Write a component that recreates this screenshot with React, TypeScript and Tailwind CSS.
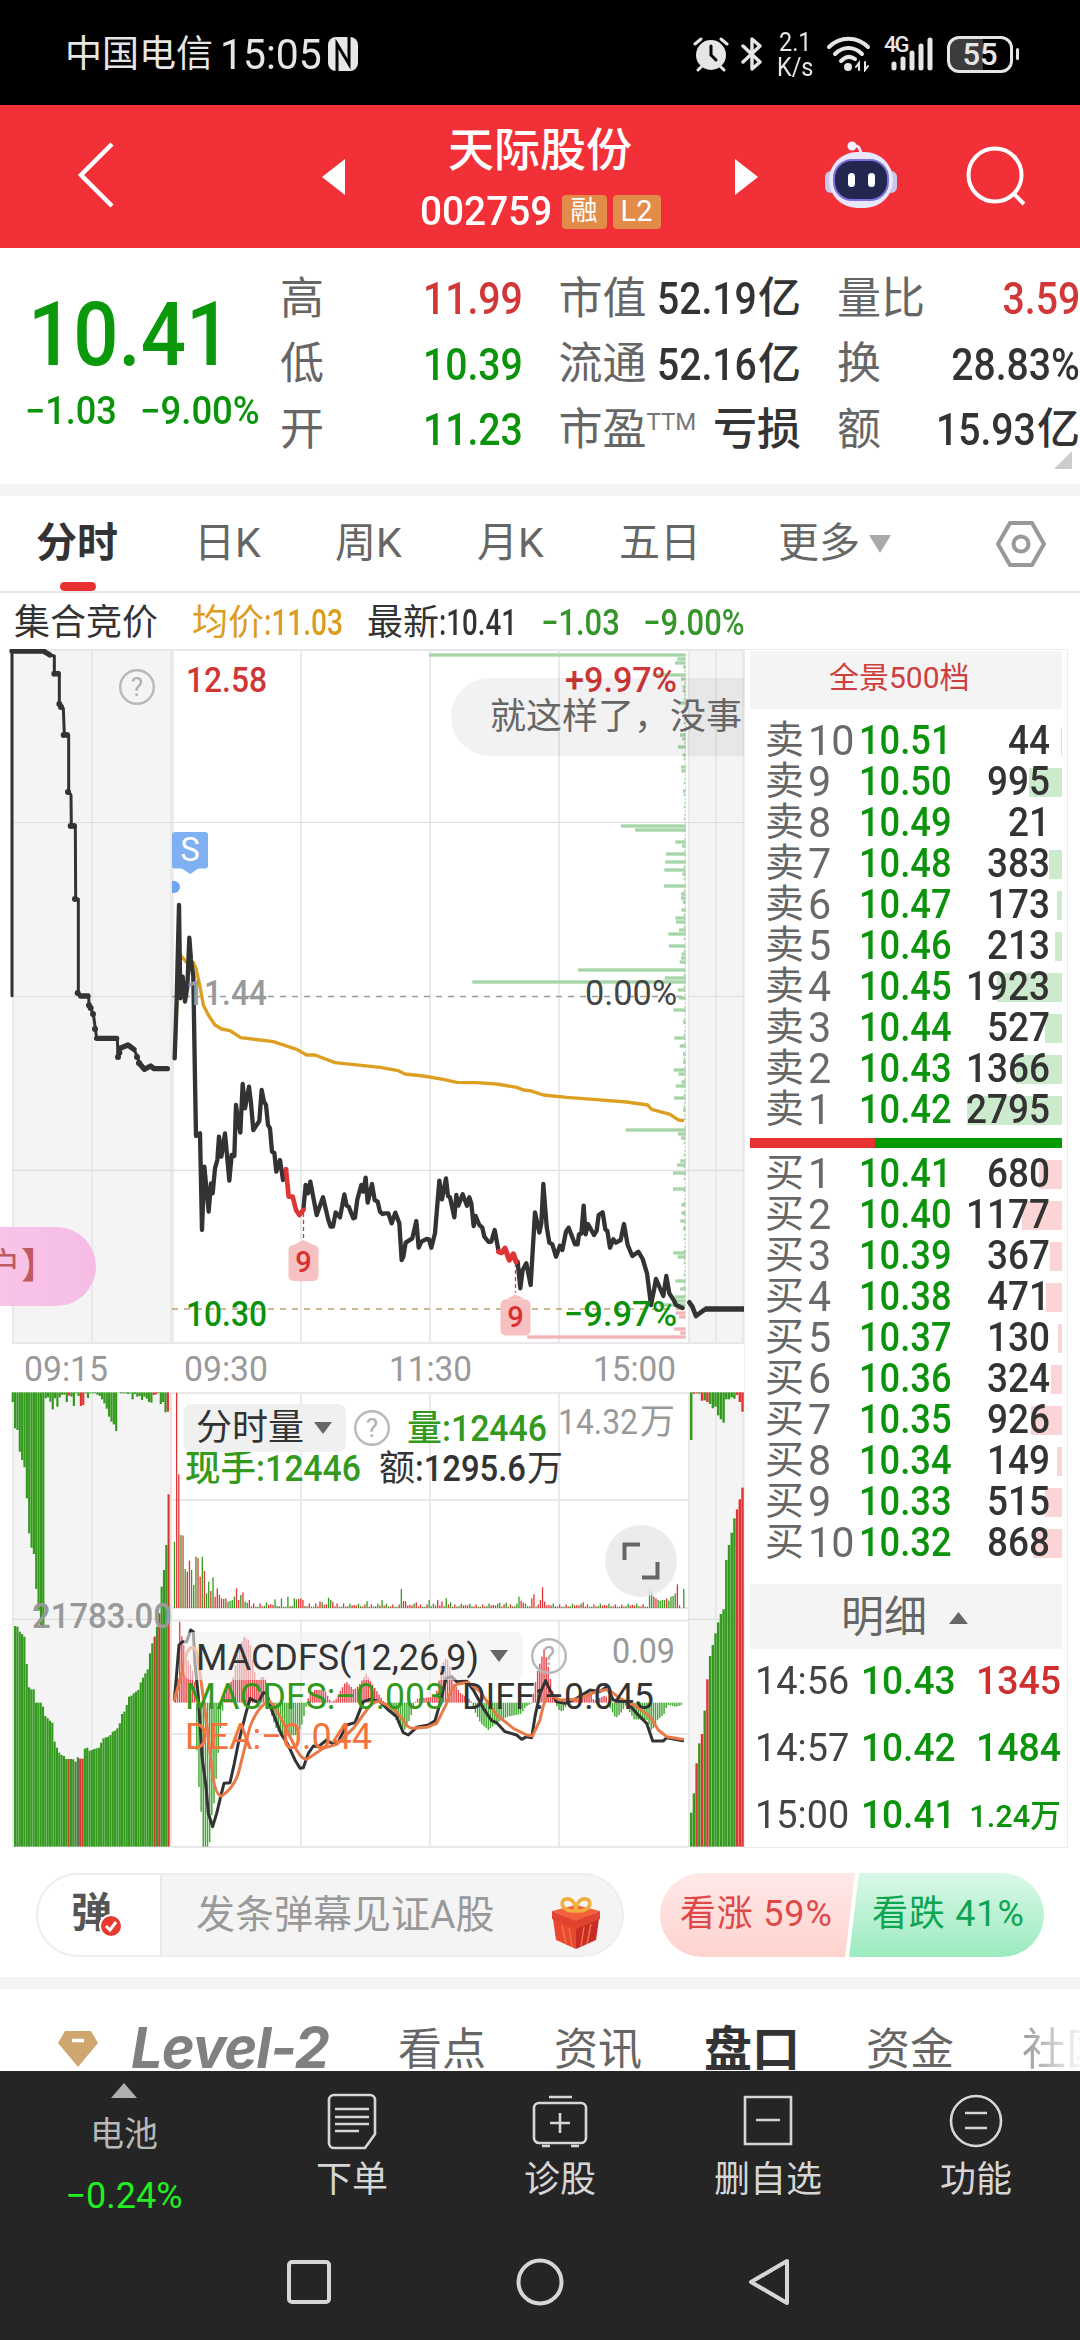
import React from 'react';

type Point = [number, number];
type Level = { label: string; price: string; amount: number; bar: number };

const GREEN = '#339a1e';
const RED = '#e03535';

const ASKS: Level[] = [
  { label: '10', price: '10.51', amount: 44, bar: 1 },
  { label: '9', price: '10.50', amount: 995, bar: 33 },
  { label: '8', price: '10.49', amount: 21, bar: 0 },
  { label: '7', price: '10.48', amount: 383, bar: 13 },
  { label: '6', price: '10.47', amount: 173, bar: 5 },
  { label: '5', price: '10.46', amount: 213, bar: 7 },
  { label: '4', price: '10.45', amount: 1923, bar: 65 },
  { label: '3', price: '10.44', amount: 527, bar: 17 },
  { label: '2', price: '10.43', amount: 1366, bar: 46 },
  { label: '1', price: '10.42', amount: 2795, bar: 95 },
];

const BIDS: Level[] = [
  { label: '1', price: '10.41', amount: 680, bar: 23 },
  { label: '2', price: '10.40', amount: 1177, bar: 40 },
  { label: '3', price: '10.39', amount: 367, bar: 12 },
  { label: '4', price: '10.38', amount: 471, bar: 16 },
  { label: '5', price: '10.37', amount: 130, bar: 4 },
  { label: '6', price: '10.36', amount: 324, bar: 11 },
  { label: '7', price: '10.35', amount: 926, bar: 31 },
  { label: '8', price: '10.34', amount: 149, bar: 5 },
  { label: '9', price: '10.33', amount: 515, bar: 17 },
  { label: '10', price: '10.32', amount: 868, bar: 29 },
];

// Series are stored at 3x resolution and scaled down by the chart groups
const AUCTION = '36,1067 36,33 130,33 150,45 163,48 163,101 178,101 178,190 190,205 193,285 206,285 206,455 213,465 214,557 226,560 227,777 235,777 235,1058 242,1068 266,1068 267,1095 280,1122 286,1165 290,1195 352,1195 354,1250 362,1225 384,1215 402,1228 412,1250 418,1270 433,1288 452,1278 462,1286 504,1287';
const AUCTION_DOTS: Point[] = [[163, 101], [174, 101], [178, 192], [183, 201], [191, 285], [201, 285], [204, 456], [212, 558], [222, 558], [225, 777], [233, 1059], [267, 1096], [272, 1104], [279, 1122], [285, 1167], [354, 1251], [358, 1238], [411, 1251], [417, 1269]];
const PRICE_OPEN = '524,1255 530,1080 537,795 541,1075 548,1010 555,1085 562,1040 568,893 573,960 580,1010 585,1320 588,1488 600,1480 606,1770 613,1580 626,1715 633,1630 638,1660 645,1585 652,1560 657,1490 664,1550 675,1480 688,1622 695,1545 703,1548 708,1395 714,1440 721,1478 728,1332 735,1405 747,1340 753,1390 760,1470 770,1455 778,1443 785,1350 792,1385 798,1395 804,1455 810,1465 816,1535 823,1538 829,1595 840,1560 849,1620 858,1588';
const PRICE_MID = '910,450 917,375 924,400 931,365 950,465 969,412 985,480 992,500 999,500 1007,457 1020,472 1033,403 1040,437 1046,440 1060,475 1065,473 1072,418 1084,375 1090,395 1097,353 1103,428 1116,372 1124,420 1133,425 1140,455 1148,462 1155,460 1165,460 1175,490 1186,458 1198,490 1205,600 1210,590 1217,548 1237,535 1249,483 1256,563 1264,545 1280,537 1287,538 1294,563 1305,520 1318,362 1326,418 1338,355 1344,408 1350,412 1363,472 1369,405 1375,437 1388,403 1401,437 1408,412 1414,430 1421,498 1427,468 1438,495 1447,503 1453,530 1466,546 1474,545 1484,510 1496,575';
const PRICE_LATE = '413,605 421,685 428,630 439,610 452,675 465,457 478,518 484,490 490,372 500,500 508,548 517,553 528,590 540,557 547,570 558,515 566,503 585,553 593,553 597,523 604,521 611,437 617,523 624,492 642,525 650,512 656,465 668,457 676,508 682,513 690,563 700,538 708,548 722,540 732,492 743,555 757,588 775,575 788,597 801,640 813,735 822,690 828,657 850,708 859,648 868,700 882,722 888,735 908,744';
const AVERAGE = '524,1255 532,1060 541,945 560,967 580,967 588,985 600,1040 610,1095 625,1125 645,1155 665,1167 690,1172 722,1193 820,1205 890,1228 920,1245 945,1245 1005,1268 1140,1282 1195,1292 1215,1302 1270,1308 1330,1318 1370,1327 1430,1328 1490,1332 1550,1342 1570,1350 1590,1352 1630,1365 1700,1372 1780,1378 1880,1386 1943,1395 1955,1408 2010,1423 2035,1440 2048,1442';
const DIFF = '523,960 530,880 537,795 548,785 560,785 572,750 580,755 585,850 595,950 606,1130 618,1220 625,1300 638,1340 650,1300 662,1250 672,1210 690,1208 703,1150 715,1090 735,1010 750,955 775,968 790,938 800,940 815,990 845,1065 862,1090 885,1140 900,1165 910,1163 925,1120 940,1098 955,1100 980,1080 1000,1093 1015,1085 1040,1035 1065,1028 1090,965 1110,958 1140,965 1165,990 1190,1010 1200,1035 1210,1058 1225,1065 1250,1042 1285,1035 1305,1022 1320,970 1338,895 1355,890 1370,905 1400,903 1420,930 1450,985 1475,1022 1490,1028 1515,1055 1550,1065 1565,1078 1580,1070 1595,1073 1605,1010 1620,940 1637,902 1652,935 1670,965 1695,970 1730,955 1770,930 1800,935 1820,920 1840,960 1880,965 1910,1000 1940,1030 1958,1083 1990,1083 2000,1073 2025,1078 2048,1082';
const DEA = 'M523,960 L545,880 L560,820 Q575,790 588,812 L600,880 L620,1030 L635,1160 Q645,1250 665,1248 Q700,1225 715,1180 L750,1040 Q770,985 805,962 Q820,965 860,1050 L890,1110 Q905,1138 920,1138 L940,1125 L970,1105 L1010,1093 L1060,1045 L1100,990 Q1120,960 1140,965 L1180,985 L1210,1020 Q1220,1045 1240,1045 L1280,1042 L1310,1030 L1340,970 Q1355,915 1375,912 L1405,907 L1440,935 L1490,1005 L1540,1045 L1580,1065 L1598,1068 L1620,1020 Q1635,945 1650,945 L1680,960 L1730,958 L1790,935 L1825,928 L1860,955 L1910,980 L1950,1010 L1975,1050 L2000,1070 L2048,1078';

// [y, length] of the cost distribution, right aligned
const COSTS: Point[] = [[45, 770], [57, 25], [69, 32], [81, 8], [105, 100], [117, 14], [141, 9], [153, 9], [189, 20], [285, 17], [297, 10], [321, 23], [345, 9], [381, 14], [393, 13], [453, 8], [558, 194], [570, 152], [606, 31], [618, 11], [642, 59], [666, 61], [690, 64], [702, 10], [738, 65], [762, 14], [774, 14], [786, 9], [810, 13], [834, 31], [846, 29], [870, 20], [882, 52], [918, 50], [942, 12], [954, 14], [966, 18], [990, 323], [1014, 63], [1026, 640], [1050, 23], [1074, 20], [1110, 37], [1146, 8], [1194, 34], [1218, 18], [1242, 8], [1266, 8], [1290, 36], [1302, 22], [1326, 13], [1338, 30], [1374, 35], [1410, 8], [1470, 180], [1482, 23], [1494, 14], [1563, 16], [1575, 26], [1599, 38], [1647, 38], [1695, 13], [1719, 13], [1743, 16], [1767, 8], [1839, 37], [1851, 24], [1923, 31], [1947, 17], [1971, 34], [1983, 35], [1995, 80]];
const COSTS_RED: Point[] = [[2019, 30], [2031, 20], [2067, 35], [2079, 16], [2091, 475]];
const COST_TICKS = Array.from({ length: 158 }, (_, i) => 81 + i * 12);

const AUCTION_TOP = [66, 145, 150, 215, 240, 262, 355, 460, 503, 522, 627, 692, 735, 735, 55, 52, 65, 88, 55, 80, 52, 44, 44, 66, 47, 50, 78, 40, 48, 78, 75, 40, 54, 40, 40, 40, 44, 48, 58, 70, 86, 110, 125, 133, 153, 38, 40, 40, 40, 42, 40, 58, 42, 50, 48, 60, 50, 56, 66, 68, 45, 43, 40, 72, 66, 97, 95];
const AUCTION_BASE = [1400, 738, 740, 755, 762, 770, 852, 922, 928, 928, 968, 968, 968, 980, 1008, 1015, 1022, 1028, 1085, 1103, 1118, 1125, 1128, 1137, 1137, 1137, 1138, 1145, 1132, 1136, 1136, 1106, 1103, 1112, 1110, 1107, 1105, 1103, 1088, 1075, 1072, 1070, 1065, 1055, 1052, 1045, 1030, 1002, 995, 975, 950, 947, 940, 935, 930, 907, 893, 880, 868, 820, 790, 770, 740, 700, 620, 570, 495, 343];
const CLOSE_TOP = [180, 41, 40, 41, 62, 61, 66, 72, 85, 80, 106, 118, 128, 58, 58, 52, 56, 45, 66, 95];
const CLOSE_BASE = [1298, 1240, 1150, 1090, 1062, 992, 898, 828, 795, 760, 727, 702, 688, 540, 495, 458, 415, 388, 358, 323];
const CLOSE_RED = [2, 4, 6, 17, 18, 19];

const VOLUME_OPEN = [485, 38, 283, 465, 468, 567, 575, 542, 570, 615, 530, 535, 590, 530, 573, 640, 605, 633, 592, 650, 625, 645, 655, 657, 655, 665, 663, 660, 650, 625, 660, 645, 637, 665, 668, 660];
const VOLUME_OPEN_RED = [1, 2, 4, 6, 7, 11, 12, 14, 17, 19, 20, 21, 22, 24, 29, 30, 32, 35];
const VOLUME_PEAKS: Record<number, [number, string]> = {
  47: [658, GREEN], 50: [655, GREEN], 53: [650, GREEN], 56: [655, GREEN], 57: [658, GREEN], 58: [657, RED], 59: [655, RED], 60: [660, RED], 68: [664, RED], 72: [653, GREEN], 73: [660, GREEN], 74: [665, RED],
  90: [664, GREEN], 97: [660, GREEN], 106: [627, GREEN], 107: [663, RED], 108: [664, RED], 113: [667, RED], 119: [660, GREEN], 123: [660, RED], 125: [664, RED], 127: [655, GREEN], 129: [667, GREEN], 152: [668, GREEN], 155: [668, GREEN],
  161: [650, GREEN], 162: [662, RED], 163: [668, RED], 167: [655, RED], 168: [643, RED], 171: [660, RED], 172: [622, RED], 173: [665, RED], 191: [667, RED],
  222: [625, GREEN], 223: [635, GREEN], 224: [650, RED], 225: [655, RED], 226: [660, GREEN], 227: [663, GREEN], 228: [660, GREEN], 229: [660, GREEN], 230: [655, RED], 231: [662, GREEN], 232: [650, GREEN], 233: [648, GREEN], 234: [640, GREEN], 235: [613, RED], 236: [676, RED], 237: [684, RED], 238: [627, GREEN],
};

const MACD: Point[] = [[523, 935], [530, 905], [537, 722], [543, 768], [549, 790], [556, 830], [568, 852], [580, 885], [585, 940], [587, 1085], [593, 1205], [600, 1270], [606, 1400], [626, 1400], [632, 1310], [638, 1290], [645, 1210], [651, 1140], [657, 1060], [664, 1005], [669, 960], [677, 920], [696, 900], [709, 830], [728, 770], [747, 782], [760, 870], [770, 905], [785, 888], [798, 903], [805, 955], [811, 1000], [824, 1040], [840, 1068], [890, 1065], [905, 1030], [918, 972], [924, 950], [940, 930], [972, 930], [990, 966], [1005, 960], [1020, 930], [1036, 904], [1060, 930], [1075, 915], [1097, 880], [1110, 905], [1136, 945], [1150, 966], [1160, 980], [1180, 1010], [1200, 1042], [1215, 1050], [1230, 1010], [1240, 972], [1250, 956], [1300, 950], [1312, 925], [1320, 860], [1338, 830], [1350, 870], [1360, 912], [1380, 940], [1410, 960], [1420, 990], [1440, 1030], [1463, 1050], [1490, 1028], [1520, 1010], [1560, 1002], [1575, 980], [1592, 970], [1598, 940], [1610, 875], [1630, 808], [1640, 845], [1655, 930], [1664, 966], [1672, 988], [1685, 996], [1698, 975], [1715, 963], [1765, 930], [1780, 962], [1815, 945], [1824, 975], [1845, 1015], [1860, 1000], [1875, 976], [1900, 1018], [1940, 1020], [1953, 1055], [1970, 1020], [1990, 1002], [2000, 974], [2025, 980], [2048, 974]];

const sample = (points: Point[], x: number) => {
  const i = points.findIndex(p => p[0] >= x);
  if (i <= 0) return points[0][1];
  const [x0, y0] = points[i - 1];
  const [x1, y1] = points[i];
  return y0 + ((y1 - y0) * (x - x0)) / (x1 - x0);
};

const MACD_BARS = Array.from({ length: 237 }, (_, i) => {
  const x = 524 + i * 6.43;
  return { x, y: sample(MACD, x) };
});

const volumeBar = (i: number): [number, string] => {
  if (i < VOLUME_OPEN.length) return [VOLUME_OPEN[i], VOLUME_OPEN_RED.includes(i) ? RED : GREEN];
  if (VOLUME_PEAKS[i]) return VOLUME_PEAKS[i];
  const noise = (i * 37 + i * i * 11) % 13;
  return [680 - noise * (i < 80 ? 1.1 : 0.75), noise % 2 ? RED : GREEN];
};

const AxisText = ({ x, y, w, fill, weight = 500, size = 35, children }: { x: number; y: number; w: number; fill: string; weight?: number; size?: number; children: string }) => (
  <text x={x} y={y} textLength={w} lengthAdjust="spacingAndGlyphs" fill={fill} fontWeight={weight} fontSize={size}>{children}</text>
);

const HelpMark = ({ cx, cy }: { cx: number; cy: number }) => (
  <g>
    <circle cx={cx} cy={cy} r="16.8" fill="none" stroke="#b8b8b8" strokeWidth="2.4" />
    <text x={cx} y={cy + 9} textAnchor="middle" fontSize="26" fill="#b0b0b0">?</text>
  </g>
);

const NineTag = ({ x, y, from }: { x: number; y: number; from: number }) => (
  <g>
    <path d={`M${x} ${from}V${y - 2}`} stroke="#c04040" strokeWidth="1.3" strokeDasharray="4 3" />
    <path d={`M${x - 10} ${y + 5}L${x} ${y}L${x + 10} ${y + 5}Z`} fill="#f8c1c1" />
    <rect x={x - 15} y={y + 5} width="30" height="36" rx="5" fill="#f8c1c1" />
    <text x={x} y={y + 32} textAnchor="middle" fontSize="29" fontWeight="500" fill="#d93030">9</text>
  </g>
);

const Charts = () => (
  <svg viewBox="0 649 744 1200" className="block h-[1200px] w-[744px]">
    <rect x="12" y="649" width="160" height="694" fill="#f4f4f4" />
    <rect x="688" y="649" width="56" height="694" fill="#f4f4f4" />
    <rect x="12" y="1393" width="160" height="454" fill="#f4f4f4" />
    <rect x="688" y="1393" width="56" height="454" fill="#f4f4f4" />
    <g stroke="#e8e8e8" strokeWidth="1.8" fill="none">
      <path d="M12 650H744M12 1343H744M172 1393H744M172 1608H688M172 1620.5H688M172 1500H688M172 1734H688M172 1847H688" />
      {[13, 92, 301, 430, 559, 689, 716, 743].map(x => <path key={x} d={`M${x} 649V1343`} />)}
      <path d="M172 649V1343" strokeWidth="3.5" />
      {[301, 430, 559].map(x => <path key={x} d={`M${x} 1393V1608M${x} 1620V1847`} />)}
      {[13, 92, 171, 689, 716, 743].map(x => <path key={x} d={`M${x} 1393V1847`} />)}
      <path d="M12 822.5H744M12 996.5H172M688 996.5H744M12 1170.3H744M12 1619.3H172M688 1619.3H744" strokeWidth="1.2" stroke="#dedede" />
    </g>
    <path d="M172 996.5H684" stroke="#999" strokeWidth="1.4" strokeDasharray="6 6" />
    <path d="M172 1309H688" stroke="#bda070" strokeWidth="1.6" strokeDasharray="6 6" />

    <g transform="translate(380 640) scale(.33333)">
      {COST_TICKS.map((y, i) => <rect key={y} x={917 - 2 - (i % 3) * 2} y={y - 4} width={2 + (i % 3) * 2} height="8" fill={y > 2010 ? '#f2b4b6' : '#a6d5a8'} />)}
      {COSTS.map(([y, len]) => <rect key={y} x={917 - len} y={y - 5} width={len} height="10" fill="#a6d5a8" />)}
      {COSTS_RED.map(([y, len]) => <rect key={y} x={917 - len} y={y - 5} width={len} height="10" fill="#f2b4b6" />)}
    </g>

    <g transform="translate(0 640) scale(.33333)" fill="none" strokeLinejoin="round" strokeLinecap="round">
      <polyline points={AVERAGE} stroke="#dd9f22" strokeWidth="10" />
      <polyline points={AUCTION} stroke="#333" strokeWidth="9" />
      <path d="M36 33H130L150 45M242 1068H264M290 1195H350M360 1225L384 1215L402 1228M418 1270L433 1288L452 1278L462 1286H502" stroke="#333" strokeWidth="16" />
      {AUCTION_DOTS.map(([x, y]) => <circle key={`${x}-${y}`} cx={x} cy={y} r="9" fill="#333" />)}
      <polyline points={PRICE_OPEN} stroke="#333" strokeWidth="13" />
    </g>
    <g transform="translate(0 1060) scale(.33333)" fill="none" strokeLinejoin="round" strokeLinecap="round">
      <polyline points={PRICE_MID} stroke="#333" strokeWidth="13" />
      <polyline points="858,328 866,410 878,410 888,450 898,465 910,450" stroke={RED} strokeWidth="14" />
      <g transform="translate(1140 0)">
        <polyline points={PRICE_LATE} stroke="#333" strokeWidth="13" />
        <polyline points="356,575 365,578 375,565 388,600 400,582 408,605" stroke={RED} strokeWidth="16" />
        <path d="M928 727L937 740L948 768L975 748" stroke="#333" strokeWidth="14" />
        <path d="M975 747H1092" stroke="#333" strokeWidth="17" strokeLinecap="butt" />
      </g>
    </g>
    <NineTag x={303.5} y={1240} from={1213} />
    <NineTag x={515.5} y={1294.5} from={1263} />

    <rect x="172" y="832" width="36" height="36.5" rx="3" fill="#7fb0f2" />
    <path d="M181 868L190.300 874L199 868Z" fill="#7fb0f2" />
    <text x="190" y="861" textAnchor="middle" fontSize="33" fill="#fff">S</text>
    <path d="M172 881h2a6 6 0 0 1 0 12h-2Z" fill="#70a6ee" />

    <HelpMark cx={137} cy={687} />
    <AxisText x={186} y={692} w={81} fill="#cf3636">12.58</AxisText>
    <AxisText x={565} y={692} w={112} fill="#cf3636">+9.97%</AxisText>
    <AxisText x={186} y={1004.500} w={81} fill="#999">11.44</AxisText>
    <AxisText x={585} y={1004.500} w={92} weight={400} fill="#444">0.00%</AxisText>
    <AxisText x={186} y={1325.500} w={81} fill="#0b920b">10.30</AxisText>
    <AxisText x={564} y={1325.500} w={113} fill="#0b920b">−9.97%</AxisText>
    <AxisText x={24} y={1381} w={84} weight={400} fill="#999">09:15</AxisText>
    <AxisText x={184} y={1380.500} w={84} weight={400} fill="#999">09:30</AxisText>
    <AxisText x={389} y={1380.500} w={83} weight={400} fill="#999">11:30</AxisText>
    <AxisText x={593} y={1380.500} w={83} weight={400} fill="#999">15:00</AxisText>

    <g transform="translate(0 1380) scale(.33333)">
      {AUCTION_TOP.map((y, i) => <rect key={i} x={35 + i * 7.05} y="37" width="6.6" height={y - 37} fill={[24, 29, 30, 60, 61, 66].includes(i) ? RED : GREEN} />)}
      {AUCTION_BASE.map((y, i) => <rect key={i} x={35 + i * 6.98} y={y} width="6.5" height={1400 - y} fill={[24, 29, 30, 61, 63, 67].includes(i) ? '#c93a2c' : [27, 28].includes(i) ? '#577a48' : GREEN} />)}
      <path d="M512 37V1400" stroke="#f8dcdc" strokeWidth="5" />
      {Array.from({ length: 239 }, (_, i) => {
        const [y, fill] = volumeBar(i);
        return <rect key={i} x={521.500 + i * 6.420} y={y} width="3.900" height={684 - y} fill={fill} />;
      })}
      <path d="M537 465h15v218h-15zM585 533h11v150h-11z" fill="#b39a76" opacity=".5" />
      {MACD_BARS.map(({ x, y }) => <rect key={x} x={x} y={Math.min(y, 968)} width="4.4" height={Math.max(Math.abs(y - 968), 2)} fill={y < 968 ? '#e84a50' : '#45a836'} />)}
      <g fill="none" strokeLinejoin="round" strokeLinecap="round">
        <polyline points={DIFF} stroke="#333" strokeWidth="9" />
        <path d={DEA} stroke="#e87a48" strokeWidth="9" />
      </g>
    </g>
    <g transform="translate(380 1380) scale(.33333)">
      {CLOSE_TOP.map((y, i) => <rect key={i} x={930 + i * 8.1} y="37" width="7.300" height={y - 37} fill={[...CLOSE_RED, 1].includes(i) ? RED : GREEN} />)}
      {CLOSE_BASE.map((y, i) => <rect key={i} x={930 + i * 8.1} y={y} width="7.300" height={1400 - y} fill={CLOSE_RED.includes(i) ? RED : GREEN} />)}
    </g>

    <AxisText x={32} y={1628} w={140} weight={500} fill="#999">21783.00</AxisText>
    <AxisText x={558} y={1434} w={80} weight={400} fill="#999">14.32</AxisText>
    <AxisText x={640} y={1434} w={35} weight={400} fill="#999">万</AxisText>
    <HelpMark cx={372} cy={1428} />
    <AxisText x={407} y={1440.500} w={35} size={36} fill={GREEN}>量</AxisText>
    <AxisText x={442} y={1440.500} w={105} size={36} fill={GREEN}>:12446</AxisText>
    <AxisText x={185} y={1481} w={71} size={36} fill={GREEN}>现手</AxisText>
    <AxisText x={256} y={1481} w={105} size={36} fill={GREEN}>:12446</AxisText>
    <AxisText x={379} y={1481} w={36} size={36} weight={400} fill="#333">额</AxisText>
    <AxisText x={415} y={1481} w={111} size={36} fill="#333">:1295.6</AxisText>
    <AxisText x={527} y={1481} w={36} size={36} weight={400} fill="#333">万</AxisText>
  </svg>
);

const Caret = ({ className }: { className?: string }) => (
  <svg viewBox="0 0 18 12" preserveAspectRatio="none" className={className}><path d="M0 0H18L9 12Z" fill="currentColor" /></svg>
);

const ChartPanel = () => (
  <div className="relative h-[1200px] w-[744px] overflow-hidden">
    <Charts />
    <button className="absolute left-[184px] top-[755px] flex h-12 w-[162px] items-center gap-2.5 rounded-lg bg-[#f0f0f0] pl-3 text-[36px] leading-none text-[#333]">
      分时量<Caret className="h-3 w-[18px] text-[#666]" />
    </button>
    <button className="absolute left-[184px] top-[983px] flex h-12 w-[339px] items-center rounded-lg bg-[#f0f0f0]/60" />
    <svg viewBox="184 1620 500 140" className="absolute left-[184px] top-[971px] h-[140px] w-[500px]">
      <AxisText x={196} y={1669.500} w={283} size={37} weight={450} fill="#333">MACDFS(12,26,9)</AxisText>
      <path d="M490 1650H508L499 1662Z" fill="#666" />
      <HelpMark cx={549} cy={1656} />
      <AxisText x={612} y={1663} w={63} weight={400} fill="#999">0.09</AxisText>
      <AxisText x={185} y={1709} w={260} size={37} weight={450} fill={GREEN}>MACDFS:−0.003</AxisText>
      <AxisText x={462} y={1709} w={192} size={37} weight={450} fill="#333">DIFF:−0.045</AxisText>
      <AxisText x={185} y={1749} w={187} size={37} weight={450} fill="#f4733d">DEA:−0.044</AxisText>
    </svg>
    <button className="absolute left-[605px] top-[876px] size-[72px] rounded-full bg-[#e9e9e9]/85 p-[17px]">
      <svg viewBox="0 0 38 38" className="size-full" fill="none" stroke="#666" strokeWidth="4"><path d="M2.500 18V2.500H18M20 35.500H35.500V20" /></svg>
    </button>
    <div className="absolute left-[451px] top-[29px] flex h-[78px] w-[380px] items-center whitespace-nowrap rounded-full bg-black/5 pl-[39px] text-[36px] leading-none text-[#666]">就这样了，没事</div>
    <div className="absolute -left-[60px] top-[578px] flex h-[79px] w-[156px] items-center justify-end whitespace-nowrap rounded-full bg-linear-to-r from-[#fcc8ec] to-[#f5bde4] pr-[39px] text-[36px] leading-none text-[#bd5b60]">户】</div>
  </div>
);

const LevelRow: React.FC<{ side: string; level: Level; tint: string }> = ({ side, level, tint }) => (
  <div className="relative flex h-[41px] items-center pl-[15px] pr-[12px] leading-none">
    <div className={`absolute right-0 top-[6px] h-[29px] ${tint}`} style={{ width: level.bar }} />
    <span className="relative -mt-0.5 w-[43px] shrink-0 text-[39px] text-[#666]">{side}</span>
    <span className="relative -mt-0.5 w-[51px] shrink-0 origin-left scale-x-[.96] text-[43px] font-normal text-[#6a6a6a]">{level.label}</span>
    <span className="relative -mt-0.5 w-[100px] shrink-0 origin-left scale-x-[.885] text-[41px] font-medium text-[#0b940b]">{level.price}</span>
    <span className="relative -ml-10 -mt-0.5 grow origin-right scale-x-[.9] text-right text-[41px] font-medium text-[#333]">{level.amount}</span>
  </div>
);

const TRADES = [
  { time: '14:56', price: '10.43', amount: '1345', tone: 'text-[#cf2f2f] text-[39px]' },
  { time: '14:57', price: '10.42', amount: '1484', tone: 'text-[#0b940b] text-[39px]' },
  { time: '15:00', price: '10.41', amount: '1.24万', tone: 'text-[#0b940b] text-[32px]' },
];

const OrderBook = () => (
  <div className="h-[1199px] w-[324px] border border-[#ececec] px-[5px] pt-px">
    <div className="flex h-[58px] items-center bg-[#f4f4f4] pb-[4px] pl-[79px] text-[30px] leading-none tracking-normal text-[#cf3e3e]">全景500档</div>
    <div className="mt-3">
      {ASKS.map(l => <LevelRow key={l.label} side="卖" level={l} tint="bg-[#cceacc]" />)}
    </div>
    <div className="mb-[6px] mt-[7px] flex h-[10px] bg-[#009900]">
      <div className="w-[125px] bg-[#e73030]" />
    </div>
    <div>
      {BIDS.map(l => <LevelRow key={l.label} side="买" level={l} tint="bg-[#fbd5d6]" />)}
    </div>
    <div className="mt-5 flex h-[65px] items-center bg-[#f4f4f4] pl-[91px] pt-0.5 text-[43px] leading-none text-[#666]">
      明细<Caret className="ml-[22px] h-3 w-[19px] rotate-180" />
    </div>
    {TRADES.map(t => (
      <div key={t.time} className="flex h-[67px] items-center pb-0.5 pl-[5px] pr-px text-[39px] leading-none">
        <span className="w-[106px] shrink-0 origin-left scale-x-[.97] text-[#444]">{t.time}</span>
        <span className="w-[90px] shrink-0 origin-left scale-x-[.95] font-medium text-[#0b940b]">{t.price}</span>
        <span className={`grow origin-right scale-x-[.96] text-right font-medium ${t.tone}`}>{t.amount}</span>
      </div>
    ))}
  </div>
);

const StatusBar = () => (
  <div className="flex h-[105px] items-center bg-black pl-[65px] pt-[3px] text-[#e6e6e6]">
    <span className="shrink-0 text-[37px] leading-none">中国电信</span>
    <span className="ml-[7px] w-[103px] shrink-0 origin-left scale-x-[.95] text-[43px] leading-none">15:05</span>
    <svg viewBox="0 0 32 34" className="ml-1 h-[34px] w-8 shrink-0">
      <rect x="1" y="0" width="30" height="34" rx="8" fill="currentColor" />
      <path d="M10 34V7L22 27V0" fill="none" stroke="#000" strokeWidth="3" />
    </svg>
    <svg viewBox="0 0 36 36" className="ml-[334px] size-9 shrink-0" fill="none" stroke="currentColor" strokeLinecap="round">
      <circle cx="18" cy="19" r="15" fill="currentColor" stroke="none" />
      <path d="M2 8L8 3M34 8L28 3M8 31L5 34M28 31L31 34" strokeWidth="3" />
      <path d="M18 10V19L23 24" stroke="#000" strokeWidth="3" />
    </svg>
    <svg viewBox="0 0 22 34" className="ml-[12px] h-[34px] w-[22px] shrink-0" fill="none" stroke="currentColor" strokeWidth="3.4" strokeLinejoin="round" strokeLinecap="round">
      <path d="M2 9L19 25L11 32V2L19 9L2 25" />
    </svg>
    <div className="ml-[16px] w-9 shrink-0 whitespace-nowrap text-[26px] font-normal leading-[22px]">
      <div className="origin-left scale-x-90">2.1</div>
      <div className="-ml-0.5 mt-[3px] origin-left scale-x-90">K/s</div>
    </div>
    <svg viewBox="0 0 46 36" className="ml-[11px] h-9 w-[46px] shrink-0" fill="none" stroke="currentColor" strokeWidth="4" strokeLinecap="round">
      <path d="M3 11C14 0 31 0 42 11M9 18C17 10 28 10 36 18M15 25C20 20 25 20 29 23" />
      <circle cx="22" cy="31" r="4" fill="currentColor" stroke="none" />
      <path d="M33 34V27L30 31M39 26V34L42 30" strokeWidth="2" />
    </svg>
    <div className="relative ml-[13px] h-9 w-[50px] shrink-0">
      <span className="absolute -left-px -top-0.5 text-[22px] font-medium leading-none tracking-[-2px]">4G</span>
      <svg viewBox="0 0 46 36" className="ml-1 h-9 w-[46px]" stroke="currentColor" strokeWidth="5" strokeLinecap="round">
        <path d="M5 28V32M14 23V32M23 17V32M32 10V32M41 4V32" />
      </svg>
    </div>
    <div className="ml-[12px] flex h-[37px] w-[66px] shrink-0 items-center justify-center rounded-xl border-[3px] border-current bg-linear-to-r from-[#3c3c3c] from-55% to-black to-55%">
      <span className="text-[31px] font-medium leading-none">55</span>
    </div>
    <div className="ml-[3px] h-3 w-[3px] shrink-0 rounded bg-current" />
  </div>
);

const Robot = () => (
  <svg viewBox="0 0 72 68" className="h-[68px] w-[72px]">
    <path d="M36 12C34 4 31 4 28 6" stroke="#ebe6fa" strokeWidth="3" fill="none" />
    <circle cx="27" cy="5" r="4.500" fill="#f4f2ff" />
    <rect x="0" y="30" width="12" height="22" rx="6" fill="#c8c8ee" />
    <rect x="60" y="30" width="12" height="22" rx="6" fill="#c8c8ee" />
    <rect x="4" y="11" width="64" height="56" rx="28" fill="#e8e8fa" />
    <rect x="9" y="19" width="54" height="40" rx="18" fill="#23264e" stroke="#7d6fe0" strokeWidth="2" />
    <rect x="23" y="32" width="7" height="14" rx="3.500" fill="#fff" />
    <rect x="43" y="32" width="7" height="14" rx="3.500" fill="#fff" />
  </svg>
);

const TitleBar = () => (
  <header className="flex h-[143px] items-center bg-[#f23038] text-white">
    <svg viewBox="0 0 38 66" className="-mt-1 ml-[77px] h-[66px] w-[38px]" fill="none" stroke="currentColor" strokeWidth="4.500"><path d="M35 2L4 33L35 64" /></svg>
    <svg viewBox="0 0 23 36" className="ml-[207px] h-9 w-[23px]"><path d="M23 0V36L0 18Z" fill="currentColor" /></svg>
    <div className="ml-[74px] flex w-[242px] flex-col items-center">
      <h1 className="text-[46px] font-medium leading-[60px]">天际股份</h1>
      <div className="mt-[10px] flex items-center">
        <span className="w-[133px] origin-left scale-x-[.97] text-[40px] font-medium leading-[44px]">002759</span>
        <span className="ml-[9px] flex h-[34px] w-[45px] items-center justify-center rounded bg-[#e38b49] text-[27px] leading-none">融</span>
        <span className="ml-[6px] flex h-[34px] w-12 items-center justify-center rounded bg-[#e38b49] text-[29px] leading-none">L2</span>
      </div>
    </div>
    <svg viewBox="0 0 23 36" className="ml-[74px] h-9 w-[23px]"><path d="M0 0V36L23 18Z" fill="currentColor" /></svg>
    <div className="-mt-1 ml-[67px]"><Robot /></div>
    <svg viewBox="0 0 62 62" className="ml-[69px] size-[62px]" fill="none" stroke="currentColor" strokeWidth="4"><circle cx="29" cy="29" r="26.500" /><path d="M47 47L58 58" /></svg>
  </header>
);

const Figure = ({ children, unit, tone = 'text-[#333]' }: { children: string; unit?: string; tone?: string }) => (
  <span className={`-ml-6 flex shrink-0 items-center font-medium ${tone}`}>
    <span className="origin-right scale-x-[.87] text-[45px]">{children}</span>
    {unit && <span className="ml-px text-[43px]">{unit}</span>}
  </span>
);

const QuoteLine = ({ label, sup, children }: { label: string; sup?: string; children: React.ReactNode }) => (
  <div className="flex h-[65.500px] items-center justify-between whitespace-nowrap">
    <span className="flex shrink-0 text-[44px] text-[#666]">{label}{sup && <sup className="top-0.5 text-[24px] leading-none text-[#777]">{sup}</sup>}</span>
    {children}
  </div>
);

const Quote = () => (
  <section className="relative flex h-[236px] overflow-hidden bg-white pt-[18px] leading-none">
    <div className="w-[280px] shrink-0 pt-[32px]">
      <div className="ml-[28px] w-56 origin-left scale-x-[.895] text-[89px] font-medium leading-[74px] text-[#0b990b]">10.41</div>
      <div className="mt-[20px] flex whitespace-nowrap text-[38px] font-medium leading-none text-[#0b940b]">
        <span className="ml-[25px] w-[115px] shrink-0 origin-left scale-x-[.95]">−1.03</span>
        <span className="shrink-0 origin-left scale-x-[.96]">−9.00%</span>
      </div>
    </div>
    <div className="w-[243px]">
      <QuoteLine label="高"><Figure tone="text-[#d13737]">11.99</Figure></QuoteLine>
      <QuoteLine label="低"><Figure tone="text-[#0b940b]">10.39</Figure></QuoteLine>
      <QuoteLine label="开"><Figure tone="text-[#0b940b]">11.23</Figure></QuoteLine>
    </div>
    <div className="ml-[36px] w-[243px]">
      <QuoteLine label="市值"><Figure unit="亿">52.19</Figure></QuoteLine>
      <QuoteLine label="流通"><Figure unit="亿">52.16</Figure></QuoteLine>
      <QuoteLine label="市盈" sup="TTM"><span className="text-[44px] font-medium text-[#333]">亏损</span></QuoteLine>
    </div>
    <div className="ml-[36px] w-[243px] shrink-0">
      <QuoteLine label="量比"><Figure tone="text-[#d13737]">3.59</Figure></QuoteLine>
      <QuoteLine label="换"><Figure>28.83%</Figure></QuoteLine>
      <QuoteLine label="额"><Figure unit="亿">15.93</Figure></QuoteLine>
    </div>
    <svg viewBox="0 0 18 18" className="absolute bottom-[15px] right-[8px] size-[18px]"><path d="M18 0V18H0Z" fill="#ccc" /></svg>
  </section>
);

const PeriodTabs = () => (
  <nav className="flex h-[97px] items-center border-b-2 border-[#e8e8e8] text-[41px] leading-none text-[#666]">
    <div className="relative ml-9 flex h-full w-[158px] items-center font-bold text-[#333]">
      分时<span className="absolute bottom-0 left-6 h-[9px] w-9 rounded-full bg-[#e73030]" />
    </div>
    <span className="w-[141px]">日K</span>
    <span className="w-[142px]">周K</span>
    <span className="w-[142px]">月K</span>
    <span className="w-[159px]">五日</span>
    <span className="flex w-[218px] items-center">更多<Caret className="ml-[9px] h-[18px] w-[22px] text-[#aaa]" /></span>
    <svg viewBox="0 0 50 46" className="h-[46px] w-[50px]" fill="none" stroke="#999" strokeWidth="4">
      <path d="M14 2H36L48 23L36 44H14L2 23Z" strokeLinejoin="round" /><circle cx="25" cy="23" r="7.500" />
    </svg>
  </nav>
);

const InfoLine = () => (
  <div className="flex h-[56px] items-center whitespace-nowrap pt-[3px] text-[36px] leading-none text-[#333]">
    <span className="ml-[14px] w-[178px]">集合竞价</span>
    <span className="flex w-[175px] text-[#dc9c1e]">均价<span className="origin-left scale-x-[.78] font-medium">:11.03</span></span>
    <span className="flex w-[174px]">最新<span className="origin-left scale-x-[.77] font-medium">:10.41</span></span>
    <span className="w-[102px] origin-left scale-x-[.86] font-medium text-[#35942a]">−1.03</span>
    <span className="origin-left scale-x-[.86] font-medium text-[#35942a]">−9.00%</span>
  </div>
);

const Gift = () => (
  <svg viewBox="0 0 50 54" className="h-[54px] w-[50px]">
    <path d="M1 16L25 24V53L5 44Z" fill="#e8492f" />
    <path d="M49 16L25 24V53L45 44Z" fill="#c92c24" />
    <path d="M11 29L15 48M18 32L21 51M33 31L30 50M40 28L36 48" stroke="#f0704a" strokeWidth="1.5" />
    <path d="M1 15L25 9L49 15L25 25Z" fill="#f4603c" />
    <path d="M1 15L25 25L49 15V23L25 33L1 23Z" fill="#e04430" />
    <path d="M25 15C10 16 8 4 15 3C21 2 25 8 25 15C25 8 29 2 35 3C42 4 40 16 25 15Z" fill="none" stroke="#f2ae3c" strokeWidth="3.600" />
  </svg>
);

const DanmuBar = () => (
  <div className="flex h-[128px] items-center pl-9 pr-9 pt-[4px] leading-none">
    <div className="flex h-[84px] w-[588px] items-center overflow-hidden rounded-full border-2 border-[#eee] bg-[#f4f4f4]">
      <div className="relative flex h-full w-[124px] items-center border-r-2 border-[#e8e8e8] bg-white pb-1 pl-[33px] text-[41px] font-bold text-[#555]">
        弹
        <svg viewBox="0 0 24 24" className="absolute bottom-[17px] left-[61px] size-6"><circle cx="12" cy="12" r="11" fill="#e63c30" stroke="#fff" strokeWidth="2" /><path d="M7 12L11 16L17 8" fill="none" stroke="#fff" strokeWidth="3" /></svg>
      </div>
      <span className="ml-[34px] w-[355px] whitespace-nowrap text-[39px] text-[#999]">发条弹幕见证A股</span>
      <div className="mt-4"><Gift /></div>
    </div>
    <div className="relative ml-9 flex h-[84px] w-[384px] items-center overflow-hidden rounded-full pb-0.5 text-[36px]">
      <svg viewBox="0 0 384 84" className="absolute inset-0 size-full">
        <defs>
          <linearGradient id="up" x2="0" y2="1"><stop stopColor="#fee9e8" /><stop offset="1" stopColor="#fed3ce" /></linearGradient>
          <linearGradient id="down" x2="0" y2="1"><stop stopColor="#daf8e8" /><stop offset="1" stopColor="#9cebbf" /></linearGradient>
        </defs>
        <path d="M0 0H195L185 84H0Z" fill="url(#up)" /><path d="M199 0H384V84H189Z" fill="url(#down)" />
      </svg>
      <span className="relative ml-5 w-[192px] whitespace-nowrap tracking-[.8px] text-[#e04848]">看涨 59%</span>
      <span className="relative whitespace-nowrap tracking-[.8px] text-[#0da552]">看跌 41%</span>
    </div>
  </div>
);

const SectionTabs = () => (
  <nav className="flex h-[82px] overflow-hidden whitespace-nowrap pt-[37px] text-[44px] leading-[48px] text-[#666]">
    <svg viewBox="0 0 40 36" className="ml-[58px] mt-[5px] h-9 w-10 shrink-0"><path d="M7 0H33L40 12L20 36L0 12Z" fill="#cfa670" /><path d="M14 9.500H26" stroke="#fff" strokeWidth="3.500" /></svg>
    <span className="-mt-0.5 ml-[33px] w-[267px] shrink-0 font-[Inter] text-[56px] font-bold italic leading-[48px] tracking-[-1px] text-[#808080]">Level-2</span>
    <span className="w-[156px] shrink-0">看点</span>
    <span className="w-[150px] shrink-0">资讯</span>
    <span className="w-[162px] shrink-0 text-[48px] font-bold text-[#333]">盘口</span>
    <span className="w-[156px] shrink-0">资金</span>
    <span className="shrink-0 bg-linear-to-r from-[#999] to-[#f4f4f4] to-65% bg-clip-text text-transparent">社区</span>
  </nav>
);

const ACTIONS = [
  { label: '下单', icon: <path d="M8 3H44a5 5 0 0 1 5 5V42L39 56H8a5 5 0 0 1-5-5V8a5 5 0 0 1 5-5ZM9 17H43M9 25H43M9 32H43M9 39H33" /> },
  { label: '诊股', icon: <path d="M15 5H38M5 11H47a5 5 0 0 1 5 5V46a5 5 0 0 1-5 5H5a5 5 0 0 1-5-5V16a5 5 0 0 1 5-5ZM26 21V41M16 31H36M8 54H16M37 54H45" /> },
  { label: '删自选', icon: <path d="M3 5H49V52H3ZM14 28H38" /> },
  { label: '功能', icon: <path d="M26 4a25 25 0 1 1 0 50a25 25 0 1 1 0-50ZM15 21H37M15 36H37" /> },
];

const BottomBar = () => (
  <footer className="h-[269px] bg-[#252525] text-[#d6d6d6]">
    <div className="flex h-[158px] leading-none">
      <div className="flex w-[248px] flex-col items-center pt-3">
        <Caret className="h-[15px] w-[26px] rotate-180 text-[#b0b0b0]" />
        <span className="mt-[19px] text-[34px] text-[#b8b8b8]">电池</span>
        <span className="mt-[27px] text-[36px] text-[#22ee22]">−0.24%</span>
      </div>
      {ACTIONS.map(a => (
        <div key={a.label} className="flex w-[208px] flex-col items-center pt-[21px]">
          <svg viewBox="-2 0 56 60" className="h-[60px] w-14" fill="none" stroke="currentColor" strokeWidth="2.600">{a.icon}</svg>
          <span className="mt-[10px] text-[36px]">{a.label}</span>
        </div>
      ))}
    </div>
    <div className="flex h-[106px] items-center pl-[286px]">
      <svg viewBox="0 0 46 46" className="size-[46px]" fill="none" stroke="currentColor" strokeWidth="4"><rect x="3" y="3" width="40" height="40" rx="3" /></svg>
      <svg viewBox="0 0 48 48" className="ml-[184px] size-12" fill="none" stroke="currentColor" strokeWidth="4"><circle cx="24" cy="24" r="21.500" /></svg>
      <svg viewBox="0 0 44 48" className="ml-[183px] h-12 w-11" fill="none" stroke="currentColor" strokeWidth="4" strokeLinejoin="round"><path d="M40 3V45L4 24Z" /></svg>
    </div>
  </footer>
);

export default function App() {
  return (
    <div className="flex h-[2340px] w-[1080px] flex-col overflow-hidden bg-white font-[Roboto,'Noto_Sans_CJK_SC',sans-serif]">
      <StatusBar />
      <TitleBar />
      <Quote />
      <div className="h-3 shrink-0 bg-[#f4f4f4]" />
      <PeriodTabs />
      <InfoLine />
      <main className="flex h-[1200px] shrink-0">
        <ChartPanel />
        <OrderBook />
      </main>
      <DanmuBar />
      <div className="h-3 shrink-0 bg-[#f4f4f4]" />
      <SectionTabs />
      <BottomBar />
    </div>
  );
}
